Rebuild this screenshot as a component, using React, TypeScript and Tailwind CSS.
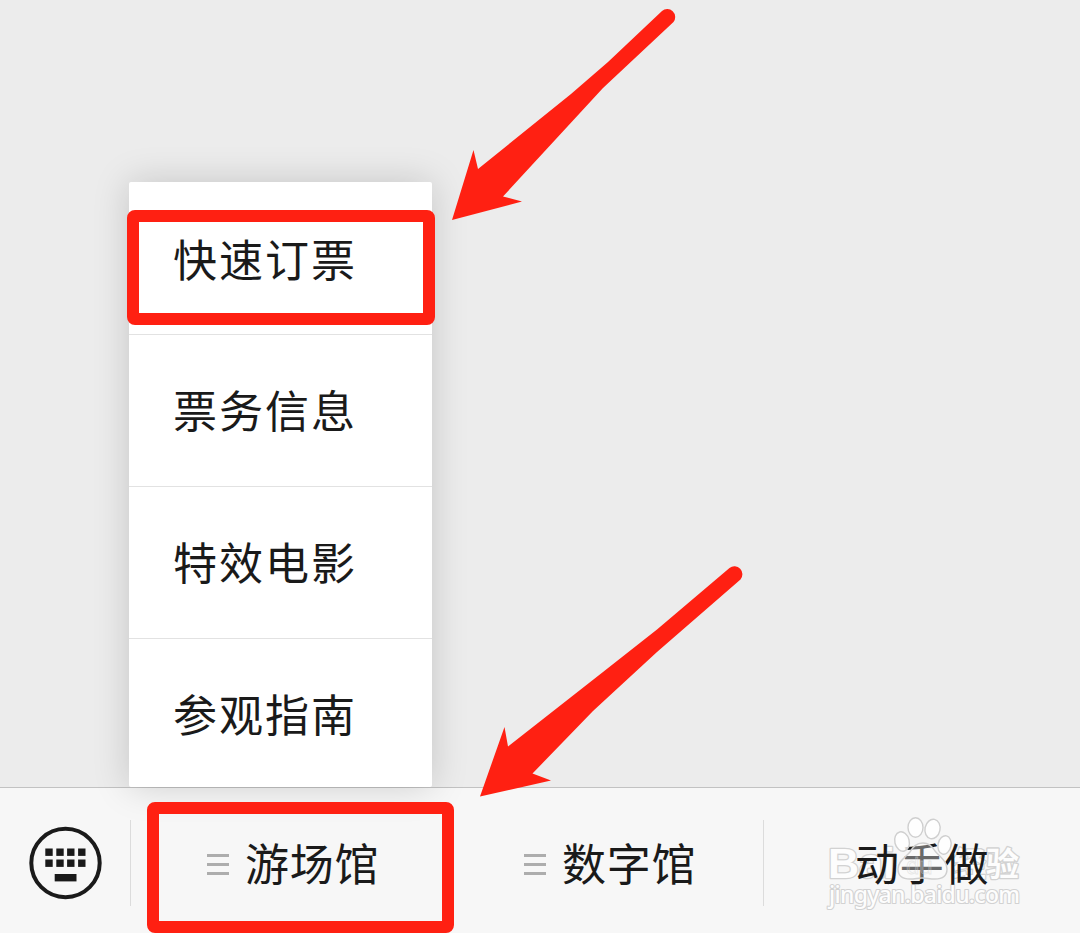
import React from 'react'

const menuItems = ['快速订票', '票务信息', '特效电影', '参观指南']

const KeyboardIcon: React.FC = () => (
  <svg className="h-[74px] w-[74px]" viewBox="0 0 74 74" fill="#1a1a1a">
    <circle cx="37.5" cy="37" r="34.2" fill="none" stroke="#1a1a1a" strokeWidth="4" />
    {[22.5, 33.5].map((y) =>
      [17.3, 28.3, 39.1, 50.1].map((x) => <rect key={`${x}-${y}`} x={x} y={y} width="7.4" height="7.4" />)
    )}
    <rect x="26.7" y="48" width="21.8" height="7.4" />
  </svg>
)

const MenuLines: React.FC = () => (
  <div className="flex w-[22px] flex-col gap-[6px] pt-[6px]">
    <div className="h-[3px] bg-[#adadad]" />
    <div className="h-[3px] bg-[#adadad]" />
    <div className="h-[3px] bg-[#adadad]" />
  </div>
)

const TabLabel: React.FC<{ text: string }> = ({ text }) => (
  <span className="relative z-10 text-[44px] leading-[64px] tracking-[0.7px] whitespace-nowrap">{text}</span>
)

const PopupMenu: React.FC = () => (
  <div className="absolute top-[182px] left-[129px] z-10 h-[605px] w-[303px] rounded-[2px] bg-white shadow-[0_0_36px_rgba(0,0,0,0.17)]">
    {menuItems.map((item, i) => (
      <div
        key={item}
        className={`flex h-[152px] items-center pl-[44px] ${i > 0 ? 'border-t border-[#e2e2e2] pb-[3px]' : 'pb-px'}`}
      >
        <span className="text-[44px] leading-[64px] tracking-[2px] whitespace-nowrap">{item}</span>
      </div>
    ))}
  </div>
)

// Outlined lettering, sits under the tab label
const WatermarkText: React.FC = () => (
  <svg
    className="absolute top-[812px] left-[820px] h-[104px] w-[210px]"
    viewBox="820 812 210 104"
    fill="#fdfdfd"
    stroke="#d2d2d2"
    strokeWidth="2.6"
    strokeLinejoin="round"
    paintOrder="stroke"
  >
    <text x="828" y="877.500" fontFamily="Liberation Sans, sans-serif" fontWeight="700" fontSize="43" textLength="67">
      Bai
    </text>
    <text x="953" y="876" fontFamily="Noto Sans CJK SC, sans-serif" fontWeight="700" fontSize="33">
      经验
    </text>
    <text x="829" y="903" fontFamily="Noto Sans, sans-serif" fontWeight="500" fontSize="23" textLength="191" strokeWidth="2.2">
      jingyan.baidu.com
    </text>
  </svg>
)

// Paw with the short name in its pad, sits over the tab label
const WatermarkPaw: React.FC = () => (
  <svg
    className="absolute top-[812px] left-[890px] z-20 h-[72px] w-[66px]"
    viewBox="890 812 66 72"
    fill="#ffffff"
    fillOpacity="0.8"
    stroke="#cfcfcf"
    strokeWidth="1.4"
  >
    <ellipse cx="915.5" cy="827.500" rx="7.5" ry="9.8" />
    <ellipse cx="932.5" cy="829" rx="7.5" ry="9.8" transform="rotate(12 932.5 829)" />
    <ellipse cx="902" cy="841.5" rx="7.2" ry="9.8" transform="rotate(-14 902 841.5)" />
    <ellipse cx="944.5" cy="845" rx="6.5" ry="9.3" transform="rotate(12 944.5 845)" />
    <path
      fillOpacity="0.35"
      d="M923 843c-7 0-10 4-13 9-4 5-12 9-12 17 0 7 5 10 12 10 5 0 8-1 12-1s8 1 13 1c7 0 12-3 12-10 0-8-7-12-12-18-3-5-6-8-12-8z"
    />
    <text
      x="906"
      y="874"
      fontFamily="Liberation Sans, sans-serif"
      fontSize="24"
      fillOpacity="0.15"
      strokeWidth="0.8"
      strokeOpacity="0.45"
    >
      du
    </text>
  </svg>
)

const App: React.FC = () => {
  return (
    <div className="relative flex h-[933px] w-[1080px] flex-col overflow-hidden bg-[#ececec] font-['Noto_Sans_CJK_SC',sans-serif] text-[#1a1a1a]">
      <main className="flex-1" />

      <footer className="flex h-[146px] items-center border-t border-[#c2c2c2] bg-[#f7f7f7] pt-[4px]">
        <div className="flex h-[86px] w-[131px] items-center border-r border-[#dcdcdc] pl-[28px] pt-[1px]">
          <KeyboardIcon />
        </div>
        <div className="flex h-[86px] w-[316px] items-center gap-[16px] pl-[76px] pb-[2px]">
          <MenuLines />
          <TabLabel text="游场馆" />
        </div>
        <div className="flex h-[86px] w-[317px] items-center gap-[16px] border-r border-[#dcdcdc] pl-[77px] pb-[2px]">
          <MenuLines />
          <TabLabel text="数字馆" />
        </div>
        <div className="flex h-[86px] flex-1 items-center pl-[91px] pb-[2px]">
          <TabLabel text="动手做" />
        </div>
      </footer>

      <PopupMenu />
      <WatermarkText />
      <WatermarkPaw />

      {/* Highlight frames */}
      <div className="absolute top-[210px] left-[127px] z-20 h-[115px] w-[308px] rounded-[8px] border-[12px] border-[#ff2012]" />
      <div className="absolute top-[802px] left-[147px] z-20 h-[131px] w-[307px] rounded-[8px] border-[12px] border-[#ff2012]" />

      {/* Arrows */}
      <svg className="absolute top-0 left-[440px] z-20 h-[230px] w-[250px]" viewBox="440 0 250 230" fill="#ff2012">
        <path d="M452 220L473.500 150L478 169L571 94L608 62L662 11A8 8 0 0 1 673.500 22L603 88L503 196.500L522 201.500Z" />
      </svg>
      <svg className="absolute top-[560px] left-[470px] z-20 h-[245px] w-[285px]" viewBox="470 560 285 245" fill="#ff2012">
        <path d="M480 796.500L504.500 727L508 746.500L603 672L657 629.500L729.500 568A8 8 0 0 1 740.500 579.500L657 652L593 711L532.500 773.500L551 780.500Z" />
      </svg>
    </div>
  )
}

export default App
